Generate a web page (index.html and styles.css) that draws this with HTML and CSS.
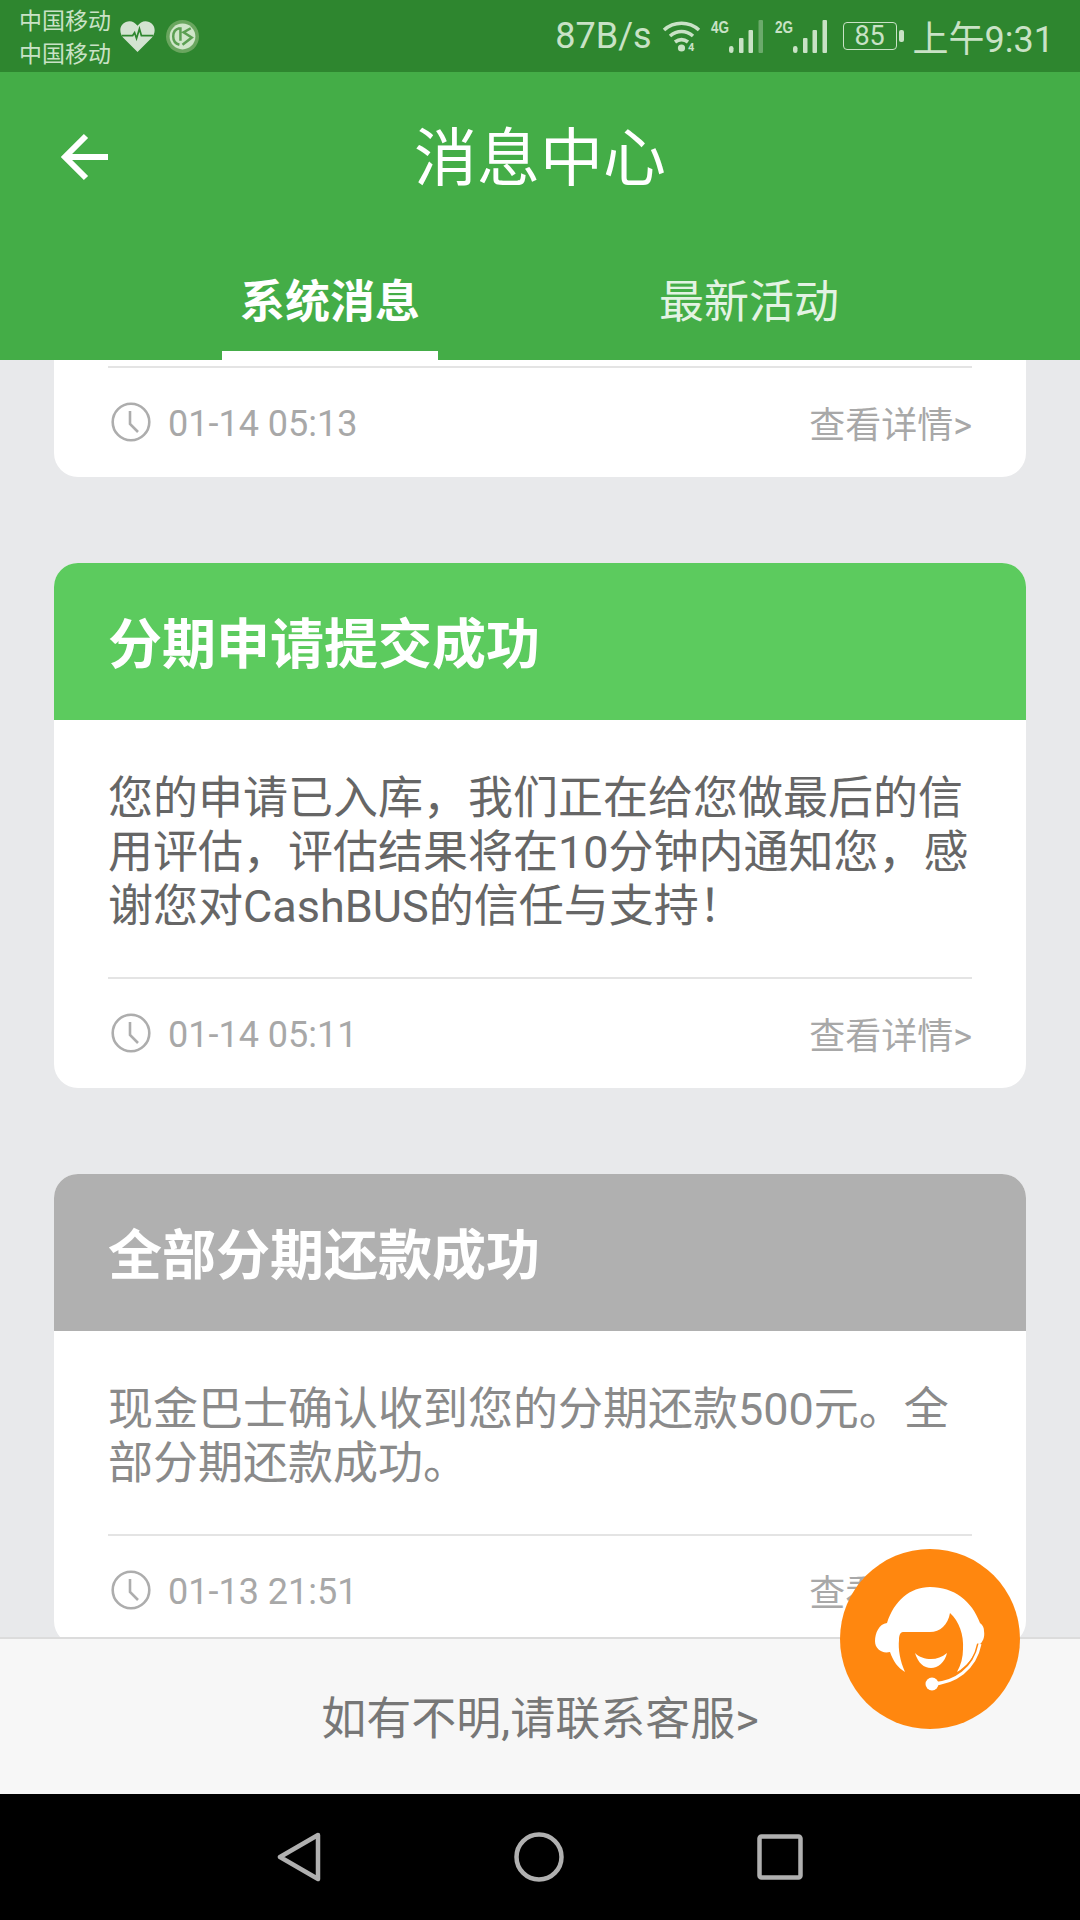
FILE: index.html
```html
<!DOCTYPE html>
<html lang="zh">
<head>
<meta charset="utf-8">
<title>消息中心</title>
<link rel="stylesheet" href="styles.css">
</head>
<body>
<div class="screen">
  <div class="status">
    <div class="carriers"><span>中国移动</span><span>中国移动</span></div>
    <svg class="st-heart" viewBox="0 0 36 32"><path d="M18 32 3 17C-1 12-1 4 6 1c5-2 9 0 12 4 3-4 7-6 12-4 7 3 7 11 3 16z" fill="#d3e3d1"/><path d="M2 15h11l2-3 2 6 3-10 2 7h12" fill="none" stroke="#2e862f" stroke-width="1.8"/></svg>
    <svg class="st-app" viewBox="0 0 32 32"><circle cx="16" cy="16" r="16" fill="#6aa65f"/><circle cx="16" cy="16" r="12.5" fill="#cfe6c9"/><path d="M13 8c-5 1-6 4-6 8s2 7 6 8M14 7v13M16 24 25 17 17 12l7-4" fill="none" stroke="#5b9f52" stroke-width="2.4"/></svg>
    <div class="st-right">
      <span class="speed">87B/s</span>
      <svg class="st-wifi" viewBox="0 0 39 32"><path d="M2 10c10-9 25-9 35 0M8 16c7-6 16-6 23 0M13 22c4-3 9-3 13 0" fill="none" stroke="#c9e2c6" stroke-width="3.6"/><circle cx="19.500" cy="28" r="3.600" fill="#c9e2c6"/><text x="26" y="31" class="st-wifi-t">4</text></svg>
      <svg class="st-sig" viewBox="0 0 52 33"><text x="0" y="13" class="st-net" textLength="18" lengthAdjust="spacingAndGlyphs">4G</text><g fill="#c9e2c6"><rect x="18" y="26" width="4.500" height="7" rx="2.200"/><rect x="28" y="18" width="4.500" height="15" rx="1"/><rect x="37.500" y="10" width="4.500" height="23" rx="1"/><rect x="47.500" y="0" width="4.500" height="33" rx="1" opacity=".4"/></g></svg>
      <svg class="st-sig" viewBox="0 0 52 33"><text x="0" y="13" class="st-net" textLength="18" lengthAdjust="spacingAndGlyphs">2G</text><g fill="#c9e2c6"><rect x="18" y="26" width="4.500" height="7" rx="2.200"/><rect x="28" y="18" width="4.500" height="15" rx="1"/><rect x="37.500" y="10" width="4.500" height="23" rx="1"/><rect x="47.500" y="0" width="4.500" height="33" rx="1"/></g></svg>
      <div class="battery"><span class="batt-box">85</span><i class="batt-tip"></i></div>
      <span class="clock">上午9:31</span>
    </div>
  </div>

  <header class="appbar">
    <div class="titlebar">
      <svg class="back" viewBox="0 0 50 50"><path d="M26 4 5 25l21 21M6 25h42" fill="none" stroke="#fff" stroke-width="6"/></svg>
      <h1 class="title">消息中心</h1>
    </div>
    <nav class="tabs">
      <div class="tab active">系统消息</div>
      <div class="tab">最新活动</div>
    </nav>
  </header>

  <main class="list">
    <section class="card card-tail">
      <div class="meta">
        <div class="time"><svg class="clock-ic" viewBox="0 0 40 40"><circle cx="20" cy="20" r="18.300" fill="none" stroke="#adadad" stroke-width="2.600"/><path d="M19 9v13l8 8" fill="none" stroke="#adadad" stroke-width="2.600"/></svg><span class="stamp">01-14 05:13</span></div>
        <span class="more">查看详情&gt;</span>
      </div>
    </section>

    <section class="card">
      <h2 class="card-head green">分期申请提交成功</h2>
      <p class="card-body dark">您的申请已入库，我们正在给您做最后的信用评估，评估结果将在10分钟内通知您，感谢您对CashBUS的信任与支持！</p>
      <div class="meta">
        <div class="time"><svg class="clock-ic" viewBox="0 0 40 40"><circle cx="20" cy="20" r="18.300" fill="none" stroke="#adadad" stroke-width="2.600"/><path d="M19 9v13l8 8" fill="none" stroke="#adadad" stroke-width="2.600"/></svg><span class="stamp">01-14 05:11</span></div>
        <span class="more">查看详情&gt;</span>
      </div>
    </section>

    <section class="card">
      <h2 class="card-head grey">全部分期还款成功</h2>
      <p class="card-body light">现金巴士确认收到您的分期还款500元。全部分期还款成功。</p>
      <div class="meta">
        <div class="time"><svg class="clock-ic" viewBox="0 0 40 40"><circle cx="20" cy="20" r="18.300" fill="none" stroke="#adadad" stroke-width="2.600"/><path d="M19 9v13l8 8" fill="none" stroke="#adadad" stroke-width="2.600"/></svg><span class="stamp">01-13 21:51</span></div>
        <span class="more">查看详情&gt;</span>
      </div>
    </section>
  </main>

  <footer class="help">如有不明,请联系客服&gt;</footer>

  <div class="navbar">
    <svg class="nav-tri" viewBox="0 0 44 50"><path d="M41 3 3 25l38 22z" fill="none" stroke="#b0b0b0" stroke-width="4.500" stroke-linejoin="round"/></svg>
    <svg class="nav-circle" viewBox="0 0 50 50"><circle cx="25" cy="25" r="22.500" fill="none" stroke="#b0b0b0" stroke-width="4.500"/></svg>
    <svg class="nav-square" viewBox="0 0 46 46"><rect x="2.500" y="2.500" width="41" height="41" rx="2" fill="none" stroke="#b0b0b0" stroke-width="4.500"/></svg>
  </div>

  <button class="fab" aria-label="客服">
    <svg viewBox="0 0 180 180">
      <path fill="#fff" d="M90 38C70 38 54 52 47 74 39 75 35 84 35 92 35 100 42 105 50 103 53 112 58 119 65 123 60 112 58 100 59 91 59 87 60 83 63 83L90 83C100 83 108 76 110 64 119 72 124 86 123 100 123 108 121 116 117 123 126 118 134 108 139 96 143 93 145 88 144 82 144 79 143 76 140 74 132 52 114 38 90 38Z"/>
      <path fill="#fff" d="M75 104C78 114 84 119 91 119 98 119 105 113 107 104 102 108 97 110 91 110 85 110 79 108 75 104Z"/>
      <path fill="none" stroke="#ff870f" stroke-width="6" d="M92 135C115 134 135 120 140 95"/>
      <path fill="none" stroke="#fff" stroke-width="3" d="M92 135C115 134 135 120 140 95"/>
      <circle cx="92" cy="135" r="6.500" fill="#fff"/>
    </svg>
  </button>
</div>
</body>
</html>
```

FILE: styles.css
```css
* { box-sizing: border-box; margin: 0; padding: 0; }
html, body { width: 1080px; height: 1920px; overflow: hidden; }
body { font-family: Roboto, "Noto Sans CJK SC", sans-serif; background: #e8e9eb; }

.screen { position: relative; width: 1080px; height: 1920px; display: flex; flex-direction: column; }

/* status bar */
.status { flex: 0 0 72px; height: 72px; background: #2e862f; color: #c9e2c6; display: flex; align-items: center; padding-left: 19px; }
.carriers { display: flex; flex-direction: column; font-size: 23px; line-height: 33px; width: 100px; padding-top: 3px; }
.st-heart { width: 35px; height: 31px; margin-left: 1px; }
.st-app { width: 33px; height: 33px; margin-left: 11px; }
.st-right { margin-left: auto; display: flex; align-items: center; padding-right: 26px; }
.speed { font-size: 36px; margin-right: 10px; }
.st-wifi { width: 39px; height: 32px; margin-right: 10px; overflow: visible; }
.st-wifi-t { font: 700 11px Roboto, sans-serif; fill: #c9e2c6; }
.st-sig { width: 52px; height: 33px; margin-right: 12px; overflow: visible; }
.st-sig + .st-sig { margin-right: 16px; }
.st-net { font: 700 17px "Liberation Sans", sans-serif; fill: #c9e2c6; }
.battery { display: flex; align-items: center; margin-right: 9px; }
.batt-box { width: 54px; height: 28px; border: 1.5px solid #c9e2c6; border-radius: 4px; font-size: 27px; line-height: 26px; text-align: center; }
.batt-tip { width: 5px; height: 12px; margin-left: 2px; background: #c9e2c6; border-radius: 2px; }
.clock { font-size: 36px; }

/* app bar */
.appbar { flex: 0 0 288px; background: #44ad47; color: #fff; display: flex; flex-direction: column; }
.titlebar { position: relative; height: 168px; display: flex; justify-content: center; align-items: center; padding-top: 6px; }
.back { position: absolute; left: 60px; top: 60px; width: 50px; height: 50px; }
.title { font-size: 63px; font-weight: 400; line-height: 80px; }
.tabs { display: flex; height: 120px; padding-left: 222px; }
.tab { width: 216px; font-size: 45px; line-height: 60px; padding-top: 33px; text-align: center; color: #e3f3e3; }
.tab + .tab { margin-left: 203px; }
.tab.active { font-weight: 700; color: #fff; border-bottom: 9px solid #fff; }

/* list */
.list { flex: 1; min-height: 0; overflow: hidden; padding: 0 54px; display: flex; flex-direction: column; gap: 86px; }
.card { flex: none; background: #fff; border-radius: 24px; overflow: hidden; }
.card-tail { border-radius: 0 0 24px 24px; padding-top: 6px; }
.card-head { height: 157px; padding-left: 54px; font-size: 54px; line-height: 166px; font-weight: 700; color: #fff; }
.green { background: #5ccb5e; }
.grey { background: #b0b0b0; }
.card-body { padding: 52px 54px 43px; font-size: 45px; line-height: 54px; }
.dark { color: #666; }
.light { color: #8a8a8a; }
.meta { margin: 0 54px; height: 111px; border-top: 2px solid #e4e4e4; display: flex; align-items: center; justify-content: space-between; padding-bottom: 2px; }
.time { display: flex; align-items: center; gap: 17px; font-size: 36px; color: #a8a8a8; }
.stamp { padding-top: 5px; }
.clock-ic { width: 40px; height: 40px; margin-left: 3px; }
.more { font-size: 36px; color: #a8a8a8; }

/* footer */
.help { flex: 0 0 157px; background: #f7f7f7; border-top: 2px solid #dcdcdc; color: #777; font-size: 45px; display: flex; align-items: center; justify-content: center; padding-bottom: 3px; }

/* nav bar */
.navbar { flex: 0 0 126px; background: #000; display: flex; align-items: center; justify-content: center; gap: 193px; }
.nav-tri { width: 44px; height: 50px; }
.nav-circle { width: 50px; height: 50px; }
.nav-square { width: 46px; height: 46px; }

/* floating button */
.fab { position: absolute; left: 840px; top: 1549px; width: 180px; height: 180px; border: 0; border-radius: 50%; background: #ff870f; }
.fab svg { display: block; width: 180px; height: 180px; }
```
